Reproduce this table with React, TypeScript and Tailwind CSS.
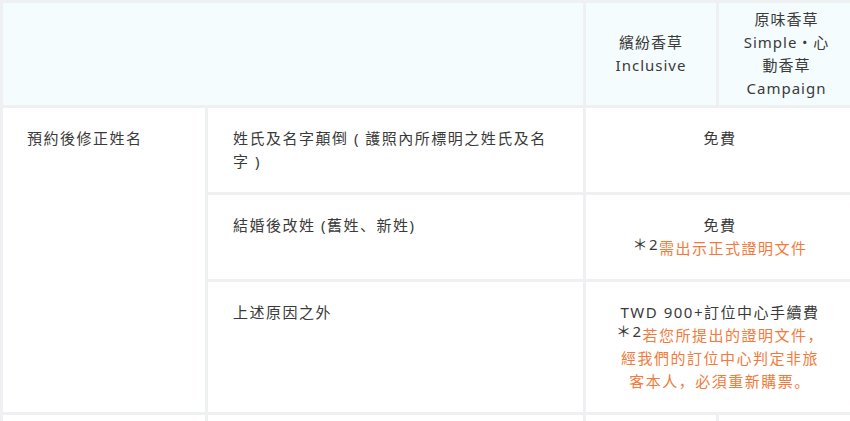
import React from 'react'

const font = { fontFamily: '"Noto Sans", "Noto Sans CJK SC", sans-serif' }

function Note({ children }: { children: React.ReactNode }) {
  return (
    <>
      <span className="text-[#3a3a3a] leading-none align-[4px]">＊2</span>
      <span className="text-[#f47a3c]">{children}</span>
    </>
  )
}

export default function App() {
  const cell = 'bg-white py-[19px]'
  return (
    <div className="w-[850px] h-[421px] overflow-hidden bg-white" style={font}>
      <div className="grid w-[860px] grid-cols-[202px_375px_130px_135px] gap-[3px] bg-[#eef0f2] p-[3px] text-[15px] leading-[23px] tracking-[1.5px] text-[#3a3a3a]">
        {/* header */}
        <div className="col-span-2 h-[102px] bg-[#f4fcfd]" />
        <div className="flex h-[102px] flex-col items-center justify-center bg-[#f4fcfd] text-center tracking-[1px]">
          <span>繽紛香草</span>
          <span>Inclusive</span>
        </div>
        <div className="flex h-[102px] flex-col items-center justify-center bg-[#f4fcfd] text-center tracking-[1px]">
          <span>原味香草</span>
          <span>Simple・心</span>
          <span>動香草</span>
          <span>Campaign</span>
        </div>

        {/* rows */}
        <div className={`${cell} row-span-3 px-6`}>預約後修正姓名</div>

        <div className={`${cell} px-[25px]`}>姓氏及名字顛倒 ( 護照內所標明之姓氏及名字 )</div>
        <div className={`${cell} col-span-2 px-5 text-center`}>免費</div>

        <div className={`${cell} px-[25px]`}>結婚後改姓 (舊姓、新姓)</div>
        <div className={`${cell} col-span-2 px-5 text-center`}>
          免費
          <br />
          <Note>需出示正式證明文件</Note>
        </div>

        <div className={`${cell} px-[25px]`}>上述原因之外</div>
        <div className={`${cell} col-span-2 px-5 text-center`}>
          TWD 900+訂位中心手續費
          <br />
          <Note>
            若您所提出的證明文件，
            <br />
            經我們的訂位中心判定非旅
            <br />
            客本人，必須重新購票。
          </Note>
        </div>

        <div className="h-[40px] bg-white" />
        <div className="h-[40px] bg-white" />
        <div className="h-[40px] bg-white" />
        <div className="h-[40px] bg-white" />
      </div>
    </div>
  )
}
